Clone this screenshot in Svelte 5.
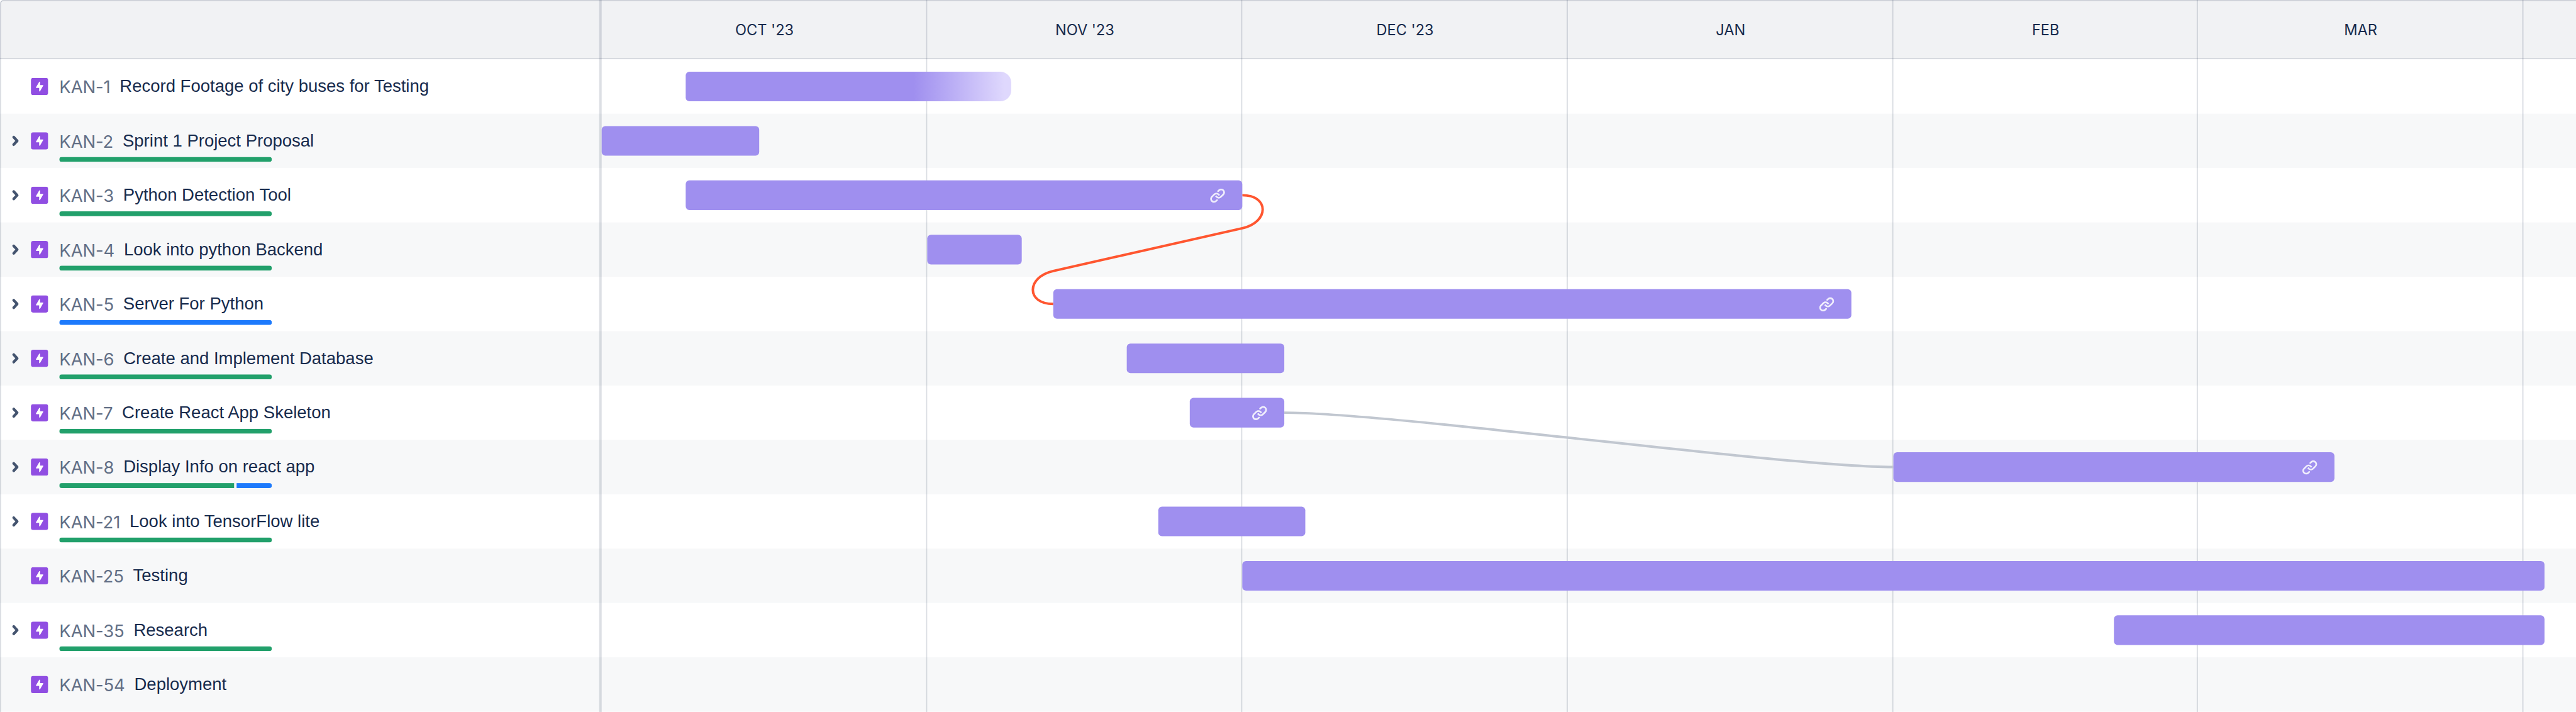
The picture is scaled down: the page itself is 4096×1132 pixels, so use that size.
<script>
  const DAY = 17;

  const months = [
    { label: "OCT '23", days: 31 },
    { label: "NOV '23", days: 30 },
    { label: "DEC '23", days: 31 },
    { label: 'JAN', days: 31 },
    { label: 'FEB', days: 29 },
    { label: 'MAR', days: 31 },
  ];

  // start and end are day offsets from October 1st
  const epics = [
    { key: 'KAN-1', title: 'Record Footage of city buses for Testing', start: 8, end: 39, openEnded: true },
    { key: 'KAN-2', title: 'Sprint 1 Project Proposal', start: 0, end: 15, done: 1 },
    { key: 'KAN-3', title: 'Python Detection Tool', start: 8, end: 61, done: 1, linked: true },
    { key: 'KAN-4', title: 'Look into python Backend', start: 31, end: 40, done: 1 },
    { key: 'KAN-5', title: 'Server For Python', start: 43, end: 119, active: 1, linked: true },
    { key: 'KAN-6', title: 'Create and Implement Database', start: 50, end: 65, done: 1 },
    { key: 'KAN-7', title: 'Create React App Skeleton', start: 56, end: 65, done: 1, linked: true },
    { key: 'KAN-8', title: 'Display Info on react app', start: 123, end: 165, done: 5, active: 1, linked: true },
    { key: 'KAN-21', title: 'Look into TensorFlow lite', start: 53, end: 67, done: 1 },
    { key: 'KAN-25', title: 'Testing', start: 61, end: 185 },
    { key: 'KAN-35', title: 'Research', start: 144, end: 185, done: 1 },
    { key: 'KAN-54', title: 'Deployment' },
  ];
</script>

<div class="roadmap">
  <header class="head">
    <div class="head-side"></div>
    {#each months as m}
      <div class="month" style="width: {m.days * DAY}px">{m.label}</div>
    {/each}
  </header>

  {#each epics as e}
    <div class="row">
      <div class="side">
        <div class="toggle">
          {#if e.done || e.active}
            <svg width="14" height="20" viewBox="0 0 14 20">
              <path d="M4.2 4 9.8 10l-5.6 6" />
            </svg>
          {/if}
        </div>
        <svg class="epic" width="28" height="28" viewBox="0 0 28 28">
          <rect width="28" height="28" rx="4" />
          <path d="M13.4 6.6 8.3 15.2c-.3.6 0 1.1.6 1.1h4.5v4.9c0 1 1.1 1.1 1.5.3l5-8.7c.3-.6 0-1.1-.6-1.1h-4.4V6.9c0-1-1.1-1.1-1.5-.3Z" />
        </svg>
        <div class="summary">
          <span class="key">{e.key}</span>
          <span class="title">{e.title}</span>
          {#if e.done || e.active}
            <div class="progress">
              {#if e.done}<i class="done" style="flex-grow: {e.done}"></i>{/if}
              {#if e.active}<i class="active" style="flex-grow: {e.active}"></i>{/if}
            </div>
          {/if}
        </div>
      </div>
      <div class="track">
        {#if e.end}
          <div class="bar" class:open={e.openEnded} style="grid-column: {e.start + 1} / {e.end + 1}">
            {#if e.linked}
              <svg width="32" height="32" viewBox="0 0 24 24">
                <path d="M12.856 5.457l-.937.92a1.002 1.002 0 0 0 0 1.437 1.047 1.047 0 0 0 1.463 0l.984-.966c.967-.95 2.542-1.135 3.602-.288a2.54 2.54 0 0 1 .203 3.81l-2.903 2.852a2.646 2.646 0 0 1-3.696 0l-1.11-1.09L9 13.57l1.108 1.089c1.822 1.788 4.802 1.788 6.622 0l2.905-2.852a4.558 4.558 0 0 0-.357-6.82c-1.893-1.517-4.695-1.226-6.422.47" />
                <path d="M11.144 19.543l.937-.92a1.002 1.002 0 0 0 0-1.437 1.047 1.047 0 0 0-1.462 0l-.985.966c-.967.95-2.542 1.135-3.602.288a2.54 2.54 0 0 1-.203-3.81l2.903-2.852a2.646 2.646 0 0 1 3.696 0l1.11 1.09L15 11.43l-1.108-1.089c-1.822-1.788-4.802-1.788-6.622 0l-2.905 2.852a4.558 4.558 0 0 0 .357 6.82c1.893 1.517 4.695 1.226 6.422-.47" />
              </svg>
            {/if}
          </div>
        {/if}
      </div>
    </div>
  {/each}

  <div class="lines">
    <div class="side-line"></div>
    {#each months as m}
      <div class="month-line" style="width: {m.days * DAY}px"></div>
    {/each}
  </div>

  <svg class="links" width="4170" height="1152" viewBox="0 0 4170 1152">
    <path class="late" d="M2011 316C2055 316 2055 359.5 2011 369.4L1705 438.6C1661 448.5 1661 492 1705 492" />
    <path class="ok" d="M2079 668C2255 668 2889 756 3065 756" />
  </svg>
</div>

<style>
  :global(body) {
    margin: 0;
    overflow: hidden;
    background: #f7f8f9;
  }

  .roadmap {
    --line: rgba(9, 30, 66, 0.14);
    position: relative;
    width: 4170px;
    height: 1153px;
    overflow: hidden;
    background: #fff;
    transform: scale(0.98225);
    transform-origin: 0 0;
    color: #172b4d;
    white-space: nowrap;
  }

  .head {
    display: flex;
    box-sizing: border-box;
    height: 96px;
    border-top: 2px solid var(--line);
    border-bottom: 2px solid var(--line);
    border-top-left-radius: 6px;
    background: #f1f2f4;
    font: 400 24px/94px Inter, sans-serif;
    text-align: center;
  }

  .head-side {
    flex: none;
    width: 974px;
  }

  .month {
    flex: none;
  }

  .row {
    display: flex;
    height: 88px;
  }

  .row:nth-child(odd) {
    background: #f7f8f9;
  }

  .side {
    display: flex;
    flex: none;
    align-items: center;
    width: 974px;
  }

  .toggle {
    display: flex;
    width: 32px;
    padding-left: 18px;
  }

  .toggle path {
    fill: none;
    stroke: #44546f;
    stroke-width: 4.4;
    stroke-linecap: round;
    stroke-linejoin: round;
  }

  .epic rect {
    fill: #904ee2;
  }

  .epic path {
    fill: #fff;
  }

  .summary {
    display: grid;
    grid-template: 70px 8px / auto 1fr;
    align-self: stretch;
    padding-left: 18px;
  }

  .key {
    padding-top: 28px;
    color: #626f86;
    font: 400 28px/34px Inter, sans-serif;
    letter-spacing: -0.15px;
  }

  .title {
    padding: 26px 0 0 15px;
    font: 400 28px/36px 'Liberation Sans', Arial, sans-serif;
  }

  .progress {
    display: flex;
    grid-column: 1 / -1;
    gap: 4px;
    width: 344px;
    overflow: hidden;
    border-radius: 4px;
  }

  .done {
    flex-basis: 0;
    background: #22a06b;
  }

  .active {
    flex-basis: 0;
    background: #1d7afc;
  }

  .track {
    display: grid;
    grid-template-columns: repeat(188, 17px);
    align-items: center;
  }

  .bar {
    display: flex;
    z-index: 3;
    align-items: center;
    justify-content: flex-end;
    box-sizing: border-box;
    height: 48px;
    padding-right: 24px;
    border-radius: 6px;
    background: #9f8fef;
  }

  .bar.open {
    border-radius: 6px 18px 18px 6px;
    background: linear-gradient(to right, #9f8fef 70%, #dfd8fd 98%);
  }

  .bar svg {
    fill: #fff;
    opacity: 0.85;
  }

  .lines {
    position: absolute;
    z-index: 1;
    inset: 0;
    display: flex;
    border-left: 2px solid var(--line);
    border-top-left-radius: 6px;
  }

  .side-line {
    flex: none;
    width: 968px;
    border-right: 4px solid var(--line);
  }

  .month-line {
    flex: none;
    box-sizing: border-box;
    border-right: 2px solid var(--line);
  }

  .links {
    position: absolute;
    z-index: 2;
    inset: 0;
  }

  .links path {
    fill: none;
    stroke-width: 4;
  }

  .late {
    stroke: #ff5630;
  }

  .ok {
    stroke: #c1c7d0;
  }
</style>
